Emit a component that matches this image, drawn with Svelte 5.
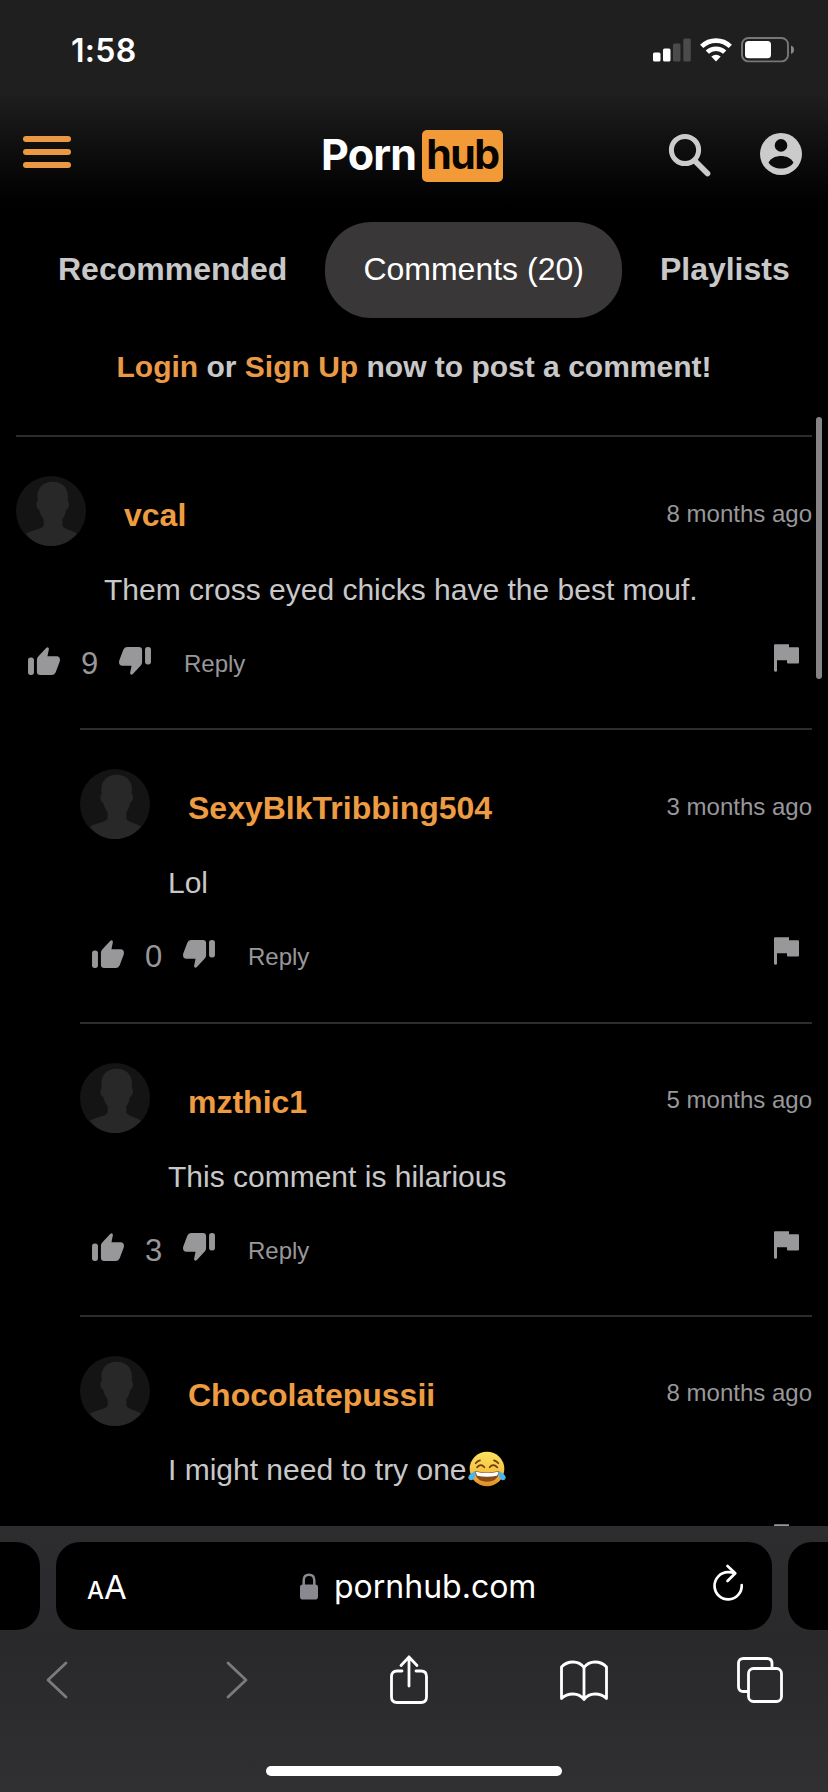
<script>
  const comments = [
    { user: 'vcal', when: '8 months ago', text: 'Them cross eyed chicks have the best mouf.', votes: 9, reply: false },
    { user: 'SexyBlkTribbing504', when: '3 months ago', text: 'Lol', votes: 0, reply: true },
    { user: 'mzthic1', when: '5 months ago', text: 'This comment is hilarious', votes: 3, reply: true },
    { user: 'Chocolatepussii', when: '8 months ago', text: 'I might need to try one', votes: null, reply: true, joy: true }
  ];
</script>

{#snippet thumb(down)}
  <svg class="thumb" class:down viewBox="0 0 97 85">
    <rect y="32" width="18" height="53" rx="8" />
    <path d="M27 39Q27 33 31 29L55 3Q59-1 62 2Q64 4 63 8L59 28H87Q97 29 97 39Q97 42 96 45L84 77Q81 85 73 85H37Q27 85 27 75Z" />
  </svg>
{/snippet}

<div class="phone">
  <header>
    <div class="status">
      <span class="time">1:58</span>
      <svg class="signal" width="38" height="24" viewBox="0 0 38 24">
        <rect x="0" y="14.5" width="7.5" height="9" rx="1.5" fill="#fff" />
        <rect x="10" y="10.5" width="7.5" height="13" rx="1.5" fill="#fff" />
        <rect x="20" y="5.5" width="7.5" height="18" rx="1.5" fill="#4b4b4b" />
        <rect x="30.3" y="0.5" width="7.5" height="23" rx="1.5" fill="#4b4b4b" />
      </svg>
      <svg class="wifi" width="32" height="24" viewBox="0 0 32 24">
        <g fill="none" stroke="#fff" stroke-width="4.6">
          <path d="M1.7 8.4A20.5 20.5 0 0 1 30.3 8.4" />
          <path d="M7.3 14.2A12.5 12.5 0 0 1 24.7 14.2" />
        </g>
        <path fill="#fff" d="M11.3 18.5Q16 15 20.7 18.5L16 23.6Z" />
      </svg>
      <svg class="battery" width="54" height="26" viewBox="0 0 54 26">
        <rect x="1" y="1" width="46" height="23.4" rx="6.5" fill="none" stroke="#777" stroke-width="1.9" />
        <rect x="4" y="4" width="26" height="17.2" rx="3.5" fill="#fff" />
        <path fill="#888" d="M50 8.5Q53 9.5 53 12.7T50 17Z" />
      </svg>
    </div>
    <div class="bar">
      <div class="burger"><i></i><i></i><i></i></div>
      <div class="logo"><span class="porn">Porn</span><span class="hub">hub</span></div>
      <svg class="search" width="44" height="44" viewBox="0 0 44 44" fill="none" stroke="#cbcbcb">
        <circle cx="17" cy="17" r="13.6" stroke-width="5" />
        <path d="M28 29L39.5 40.5" stroke-width="5.6" stroke-linecap="round" />
      </svg>
      <svg class="account" width="42" height="42" viewBox="0 0 42 42">
        <circle cx="21" cy="21" r="21" fill="#cbcbcb" />
        <circle cx="21" cy="12.4" r="6.3" fill="#0b0b0b" />
        <path d="M8.5 29.5C11 25 16 23 21 23S31 25 33.5 29.5C31 33.5 26 35.6 21 35.6S11 33.5 8.5 29.5Z" fill="#0b0b0b" />
      </svg>
    </div>
  </header>

  <main>
    <nav>
      <span>Recommended</span>
      <span class="active">Comments (20)</span>
      <span>Playlists</span>
    </nav>
    <p class="login"><b>Login</b> or <b>Sign Up</b> now to post a comment!</p>

    {#each comments as c}
      <article class:reply={c.reply}>
        <div class="head">
          <svg class="avatar" viewBox="0 0 210 210">
            <circle cx="105" cy="105" r="105" fill="#151415" />
            <path fill="#292829" d="M110 17C80 17 64 36 64 62L65 76C59 78 60 99 70 102C73 116 79 124 83 130V148C79 161 50 161 30 173C48 197 75 210 105 210S162 197 183 173C165 161 143 161 139 148V130C144 123 149 114 150 102C160 98 162 78 155 76L156 62C156 36 140 17 110 17Z" />
          </svg>
          <span class="name">{c.user}</span>
          <span class="when">{c.when}</span>
        </div>
        <p class="text">
          {c.text}{#if c.joy}<svg class="joy" viewBox="0 0 114 108" role="img" aria-label="face with tears of joy">
            <defs>
              <linearGradient id="face" x1="0" y1="0" x2="0" y2="1">
                <stop offset="0" stop-color="#fbe35f" />
                <stop offset=".55" stop-color="#f6c443" />
                <stop offset="1" stop-color="#dc8c25" />
              </linearGradient>
            </defs>
            <circle cx="57" cy="54" r="52" fill="url(#face)" />
            <path fill="none" stroke="#6a3d0d" stroke-width="5" stroke-linecap="round" d="M27 49Q39 36 49 49M65 49Q75 36 88 49M23 37Q29 29 36 28M78 28Q86 30 91 37" />
            <path fill="#8a4a18" d="M20 60Q57 68 94 60Q91 92 57 92T20 60Z" />
            <path fill="#fff" d="M23 62Q57 69 91 62Q90 71 87 74Q57 80 27 74Z" />
            <path fill="#4cb5ee" d="M23 60Q23 87 10 88Q0 87 1 78Q3 69 23 60ZM91 60Q91 87 104 88Q114 87 113 78Q111 69 91 60Z" />
          </svg>{/if}
        </p>
        <div class="actions">
          {#if c.votes !== null}
            {@render thumb(false)}
            <span class="votes">{c.votes}</span>
            {@render thumb(true)}
            <span class="answer">Reply</span>
          {/if}
          <svg class="flag" viewBox="0 0 75 83"><path d="M0 3Q0 0 3 0H45V9H72Q75 9 75 12V55Q75 58 72 58H42Q39 58 39 55V48H9V80Q9 83 5 83T0 80Z" /></svg>
        </div>
      </article>
    {/each}
    <div class="scroll"></div>
  </main>

  <footer>
    <div class="tabs">
      <div class="side left"></div>
      <div class="url">
        <span class="aa"><small>A</small>A</span>
        <svg class="lock" width="18" height="27" viewBox="0 0 18 27">
          <path d="M3.7 13V7.5Q3.7 1.8 9 1.8T14.3 7.5V13" fill="none" stroke="#8b8990" stroke-width="2.5" />
          <rect y="11.5" width="18" height="15" rx="2.8" fill="#8b8990" />
        </svg>
        <span class="domain">pornhub.com</span>
        <svg class="reload" width="32" height="38" viewBox="0 0 32 38" fill="none" stroke="#fff" stroke-width="2.7" stroke-linecap="round" stroke-linejoin="round">
          <path d="M29.7 21A13.6 13.6 0 1 1 16 8.2Q19.5 8.1 23 9.2M15.5 2L23.3 9.2L15.5 17" />
        </svg>
      </div>
      <div class="side right"></div>
    </div>
    <div class="tools">
      <svg class="back" width="22" height="38" viewBox="0 0 22 38" stroke="#7b7b7b"><path d="M20 2L2 19L20 36" /></svg>
      <svg class="forward" width="22" height="38" viewBox="0 0 22 38" stroke="#7b7b7b"><path d="M2 2L20 19L2 36" /></svg>
      <svg class="share" width="38" height="50" viewBox="0 0 38 50" stroke="#fff">
        <path d="M12 16H7Q1.5 16 1.5 21.5V42Q1.5 47.500 7 47.500H31Q36.500 47.500 36.500 42V21.500Q36.500 16 31 16H26M19 31V2M11 10.500L19 2L27 10.500" />
      </svg>
      <svg class="book" width="48" height="42" viewBox="0 0 48 42" stroke="#fff">
        <path d="M24 7.500Q20 2 13 2Q6 2 1.500 7V38.500Q6 34 13 34T24 39.500Q28 34 35 34T46.500 38.500V7Q42 2 35 2T24 7.500V39.500" />
      </svg>
      <svg width="46" height="46" viewBox="0 0 46 46" stroke="#fff">
        <path d="M11 34.500H6.500Q1.500 34.500 1.500 29.500V6.500Q1.500 1.500 6.500 1.500H30Q35 1.500 35 6.500V11" />
        <rect x="11.500" y="11.500" width="33" height="33" rx="5" />
      </svg>
    </div>
    <div class="home"></div>
  </footer>
</div>

<style>
  :global(body) {
    margin: 0;
    background: #000;
  }

  .phone {
    width: 828px;
    height: 1792px;
    display: flex;
    flex-direction: column;
    overflow: hidden;
    background: #010001;
    color: #c9c8c9;
    font-family: "Liberation Sans", Arial, sans-serif;
  }

  svg {
    display: block;
    flex: none;
  }

  p {
    margin: 0;
  }

  header {
    flex: none;
    height: 206px;
    background: linear-gradient(#1f1f1f 0, #1f1f1f 92px, #0b0b0b 160px, #010001 204px);
  }

  .status {
    height: 100px;
    padding: 0 33px 0 71px;
    display: flex;
    align-items: center;
    box-sizing: border-box;
  }

  .time {
    margin-right: auto;
    padding-top: 1px;
    font: 600 32px/40px Inter, sans-serif;
    letter-spacing: .3px;
    color: #fff;
  }

  .wifi {
    margin: 0 9px;
  }

  .bar {
    height: 106px;
    padding: 0 26px 0 23px;
    display: flex;
    align-items: flex-start;
    box-sizing: border-box;
  }

  .burger {
    width: 48px;
    margin-top: 36px;
    display: grid;
    gap: 7.4px;
  }

  .burger i {
    height: 5.8px;
    border-radius: 3px;
    background: #ea9942;
  }

  .logo {
    margin: 30px auto 0 250px;
    display: flex;
    align-items: center;
    font: 700 43px/48px Inter, sans-serif;
  }

  .porn {
    width: 101px;
    height: 52px;
    color: #fff;
    letter-spacing: -.8px;
  }

  .hub {
    width: 81px;
    height: 52px;
    border-radius: 5px;
    background: #f29a38;
    color: #080400;
    text-align: center;
    letter-spacing: -1.5px;
    font-size: 41px;
  }

  .search {
    margin: 33px 48px 0 0;
  }

  .account {
    margin-top: 33px;
  }

  main {
    flex: 1;
    min-height: 0;
    overflow: hidden;
    position: relative;
  }

  nav {
    display: flex;
    padding: 16px 0 0 20px;
    font-size: 32px;
    font-weight: 700;
    line-height: 94px;
  }

  nav span {
    height: 96px;
    padding: 0 38px;
  }

  nav .active {
    border-radius: 46px;
    background: #393738;
    color: #fff;
    font-weight: 400;
  }

  .login {
    height: 117px;
    line-height: 98px;
    font-size: 30px;
    font-weight: 700;
    text-align: center;
  }

  .login b {
    color: #ea9a46;
  }

  article {
    height: 293.33px;
    margin: 0 16px;
    box-sizing: border-box;
    border-top: 2px solid #2d2c2d;
    padding-top: 39px;
  }

  article.reply {
    margin-left: 80px;
  }

  .head {
    display: flex;
    align-items: center;
  }

  .avatar {
    width: 70px;
    height: 70px;
  }

  .name {
    margin: 8px auto 0 38px;
    font-size: 32px;
    font-weight: 700;
    line-height: 36px;
    color: #ee9c42;
  }

  .when {
    margin-top: 5px;
    font-size: 24px;
    color: #98979a;
  }

  .text {
    display: flex;
    margin: 24px 0 0 88px;
    font-size: 30px;
    line-height: 40px;
  }

  .joy {
    width: 38px;
    height: 36px;
    margin-left: 1px;
    margin-top: 1px;
  }

  .actions {
    height: 40px;
    margin-top: 31px;
    padding: 0 13px 0 12px;
    display: flex;
    align-items: center;
    color: #98979a;
  }

  .thumb {
    width: 32px;
    height: 28px;
    margin-bottom: 1px;
    fill: #98979a;
  }

  .down {
    transform: rotate(180deg);
  }

  .votes {
    width: 59px;
    margin-top: 6px;
    text-align: center;
    font-size: 31px;
  }

  .answer {
    margin: 6px auto 0 33px;
    font-size: 24px;
  }

  .flag {
    width: 25px;
    height: 28px;
    margin-left: auto;
    margin-bottom: 6px;
    fill: #98979a;
  }

  .scroll {
    position: absolute;
    top: 211px;
    right: 6px;
    width: 6px;
    height: 262px;
    border-radius: 3px;
    background: #858485;
  }

  footer {
    flex: none;
    height: 266px;
    background: linear-gradient(#2d2c2e, #29282a 45%, #302f31);
  }

  .tabs {
    display: flex;
    gap: 16px;
    padding-top: 16px;
    height: 88px;
  }

  .side {
    width: 40px;
    background: #010001;
  }

  .left {
    border-radius: 0 24px 24px 0;
  }

  .right {
    border-radius: 24px 0 0 24px;
  }

  .url {
    flex: 1;
    display: flex;
    align-items: center;
    padding: 0 28px 0 31px;
    border-radius: 24px;
    background: #010001;
    color: #fff;
    font-family: Inter, sans-serif;
  }

  .aa {
    width: 213px;
    padding-top: 2px;
    font-size: 33px;
  }

  .aa small {
    font-size: 24px;
    font-weight: 500;
  }

  .domain {
    margin: 0 auto 0 16px;
    font-size: 32px;
  }

  .reload {
    margin-bottom: 6px;
  }

  .tools {
    height: 98px;
    padding: 2px 0 0 46px;
    box-sizing: border-box;
    display: flex;
    align-items: center;
  }

  .tools svg {
    fill: none;
    stroke-width: 2.8px;
    stroke-linecap: round;
    stroke-linejoin: round;
  }

  .back {
    margin-right: 158px;
  }

  .forward {
    margin-right: 142px;
  }

  .share {
    margin-right: 132px;
  }

  .book {
    margin-right: 129px;
    margin-top: 2px;
  }

  .home {
    width: 296px;
    height: 10px;
    margin: 38px auto 0;
    border-radius: 5px;
    background: #fff;
  }
</style>
